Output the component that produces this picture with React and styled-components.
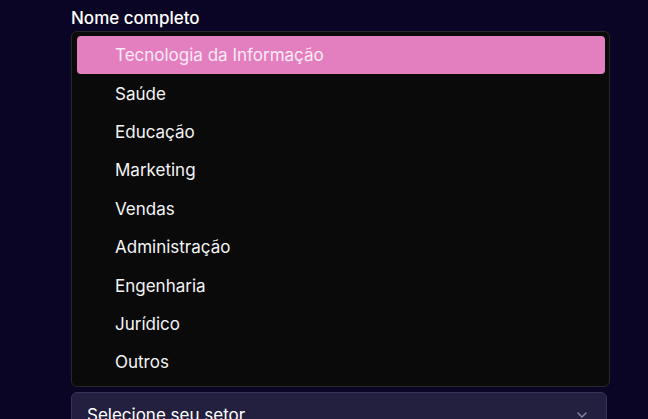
import React from "react";
import styled, { createGlobalStyle } from "styled-components";

const GlobalStyle = createGlobalStyle`
  html, body {
    margin: 0;
    padding: 0;
    background-color: #0a0524;
    font-family: Inter, "Noto Sans", sans-serif;
    overflow: hidden;
  }
`;

const Page = styled.div`
  padding: 8px 0 0 71px;
  width: 539px;
`;

const Label = styled.label`
  display: block;
  color: #ffffff;
  font-size: 17px;
  font-weight: 500;
  line-height: 20px;
  margin-bottom: 3px;
`;

const Listbox = styled.ul`
  list-style: none;
  margin: 0;
  padding: 4px 4px 4px 5px;
  background-color: #0a0a0b;
  border: 1px solid #27272a;
  border-radius: 6px;
`;

const Option = styled.li`
  display: flex;
  align-items: center;
  height: 38.4px;
  padding-left: 38px;
  border-radius: 4px;
  font-size: 17px;
  color: ${({ $active }) => ($active ? "#fbeaf5" : "#f4f4f5")};
  background-color: ${({ $active }) => ($active ? "#e47fbf" : "transparent")};
`;

const Trigger = styled.button`
  display: flex;
  align-items: center;
  justify-content: space-between;
  width: 536px;
  margin-top: 5px;
  padding: 10px 16px 10px 15px;
  background-color: #231f3e;
  border: 1px solid #38335a;
  border-radius: 6px;
  color: #ffffff;
  font-family: inherit;
  font-size: 17px;
  line-height: 24px;
  text-align: left;
`;

const Chevron = () => (
  <svg width="16" height="16" viewBox="0 0 24 24" fill="none" stroke="#8b86a3" strokeWidth="2" strokeLinecap="round" strokeLinejoin="round">
    <path d="m6 9 6 6 6-6" />
  </svg>
);

const sectors = [
  "Tecnologia da Informação",
  "Saúde",
  "Educação",
  "Marketing",
  "Vendas",
  "Administração",
  "Engenharia",
  "Jurídico",
  "Outros"
];

const App = () => (
  <Page>
    <GlobalStyle />
    <Label>Nome completo</Label>
    <Listbox>
      {sectors.map((s, i) => (
        <Option key={s} $active={i === 0}>
          {s}
        </Option>
      ))}
    </Listbox>
    <Trigger>
      Selecione seu setor
      <Chevron />
    </Trigger>
  </Page>
);

export default App;
